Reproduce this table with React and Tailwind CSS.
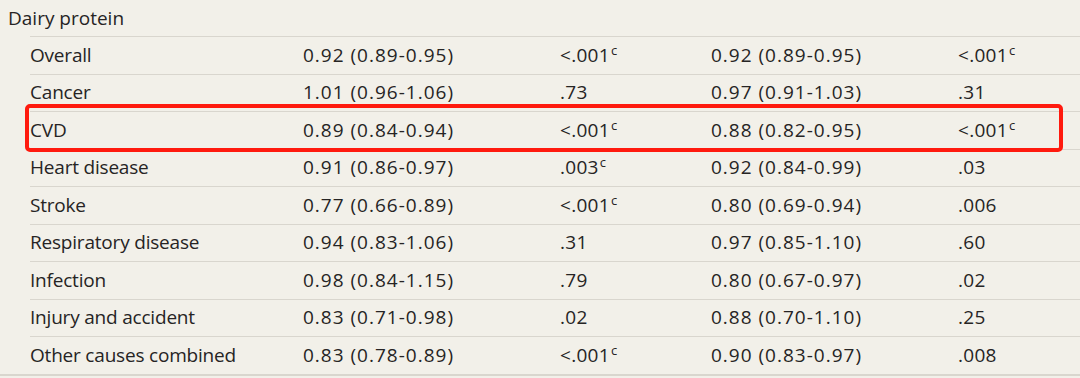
import React from "react";

const rows = [
  ["Overall", "0.92 (0.89-0.95)", ["<.001", true], "0.92 (0.89-0.95)", ["<.001", true]],
  ["Cancer", "1.01 (0.96-1.06)", [".73", false], "0.97 (0.91-1.03)", [".31", false]],
  ["CVD", "0.89 (0.84-0.94)", ["<.001", true], "0.88 (0.82-0.95)", ["<.001", true]],
  ["Heart disease", "0.91 (0.86-0.97)", [".003", true], "0.92 (0.84-0.99)", [".03", false]],
  ["Stroke", "0.77 (0.66-0.89)", ["<.001", true], "0.80 (0.69-0.94)", [".006", false]],
  ["Respiratory disease", "0.94 (0.83-1.06)", [".31", false], "0.97 (0.85-1.10)", [".60", false]],
  ["Infection", "0.98 (0.84-1.15)", [".79", false], "0.80 (0.67-0.97)", [".02", false]],
  ["Injury and accident", "0.83 (0.71-0.98)", [".02", false], "0.88 (0.70-1.10)", [".25", false]],
  ["Other causes combined", "0.83 (0.78-0.89)", ["<.001", true], "0.90 (0.83-0.97)", [".008", false]],
];

function P({ v }) {
  return (
    <span className="tracking-[0.3px]">
      {v[0]}
      {v[1] && <sup className="text-[13px] ml-[1px] relative top-[-7px] align-baseline">c</sup>}
    </span>
  );
}

export default function App() {
  return (
    <div
      className="relative w-[1080px] h-[378px] bg-[#f2f0e9] text-[#262424] text-[19px] overflow-hidden"
      style={{ fontFamily: '"Open Sans", "Noto Sans", sans-serif' }}
    >
      <div className="h-[36px] pl-[8px] flex items-center leading-none">Dairy protein</div>
      <div className="border-b-2 border-[#d9d6ce]">
        {rows.map((r, i) => (
          <div
            key={i}
            className="ml-[30px] h-[37.5px] border-t border-[#d9d6ce] grid grid-cols-[273px_257px_151px_247px_1fr] items-center leading-none"
          >
            <span className="tracking-[-0.2px]">{r[0]}</span>
            <span className="tracking-[1px]">{r[1]}</span>
            <P v={r[2]} />
            <span className="tracking-[1px]">{r[3]}</span>
            <P v={r[4]} />
          </div>
        ))}
      </div>
      <div className="absolute left-[25px] top-[104px] w-[1038px] h-[48px] border-[4px] border-[#ff1a0e] rounded-[5px]" />
    </div>
  );
}
